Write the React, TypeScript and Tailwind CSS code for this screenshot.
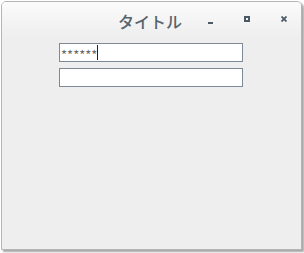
import React from "react";

const font = { fontFamily: '"Noto Sans CJK JP", "Noto Sans", sans-serif' };

export default function App() {
  return (
    <div className="w-[304px] h-[253px] bg-white pl-[1px] pt-[1px]">
      <div className="w-[301px] h-[249px] rounded-t-[5px] border border-[#b4b4b4] bg-[#eeeeee] shadow-[2px_2px_2px_rgba(0,0,0,0.35)] flex flex-col overflow-hidden">
        {/* title bar */}
        <div className="h-[36px] flex items-center bg-gradient-to-b from-[#fbfbfb] to-[#eeeeee]">
          <div className="w-[116px] shrink-0" />
          <span className="w-[66px] shrink-0 whitespace-nowrap text-[16px] font-medium text-[#55636e] leading-none pt-[1px]" style={font}>
            タイトル
          </span>
          <div className="flex items-center pl-[24px] gap-[31px] pt-[1px]">
            <div className="w-[5px] h-[6px] flex items-end">
              <div className="w-[5px] h-[2px] bg-[#4a5a66]" />
            </div>
            <div className="w-[6px] h-[6px] border-2 border-[#4a5a66] mt-[-3px]" />
            <svg width="6" height="6" viewBox="0 0 6 6" className="mt-[-3px]">
              <path d="M0.5 0.5L5.5 5.5M5.5 0.5L0.5 5.5" stroke="#4a5a66" strokeWidth="1.8" />
            </svg>
          </div>
        </div>
        {/* content */}
        <div className="flex flex-col gap-[6px] pl-[57px] pt-[5px]">
          <div className="w-[184px] h-[19px] bg-white border border-[#7c8b97] flex items-center pl-[1px]">
            <span className="text-[13px] text-[#6a6a6a] leading-none tracking-[0px] pt-[3px]" style={font}>
              ******
            </span>
            <div className="w-[1px] h-[15px] bg-[#222]" />
          </div>
          <div className="w-[184px] h-[19px] bg-white border border-[#7c8b97]" />
        </div>
      </div>
    </div>
  );
}
